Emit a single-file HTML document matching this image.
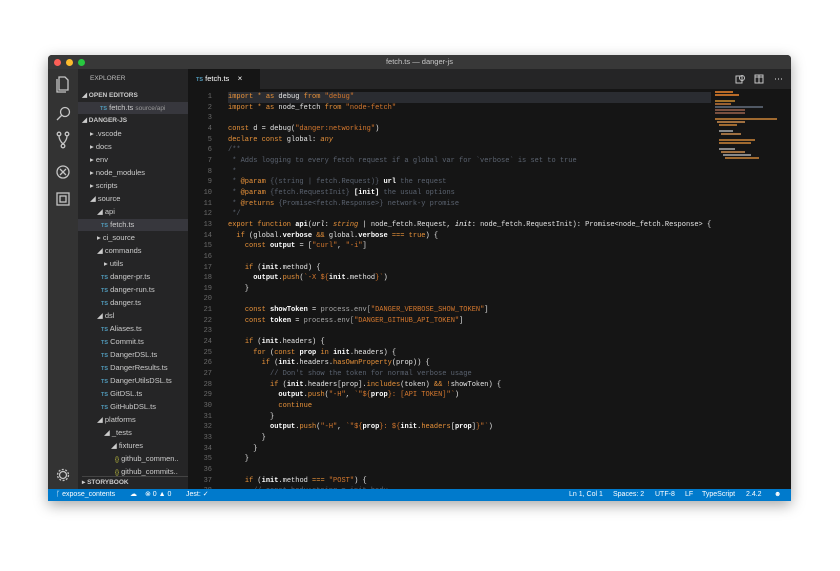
<!DOCTYPE html>
<html><head><meta charset="utf-8"><style>
*{margin:0;padding:0;box-sizing:border-box}
body{width:840px;height:571px;background:#fff;position:relative;overflow:hidden;font-family:"Liberation Sans",sans-serif}
.win{position:absolute;left:48px;top:55px;width:743px;height:446px;background:#151515;box-shadow:0 4px 14px rgba(0,0,0,.35);overflow:hidden;border-radius:4px 4px 0 0}
.title{position:absolute;left:0;top:0;width:100%;height:14px;background:#383838;color:#c8c8c8;font-size:7.5px;text-align:center;line-height:14px}
.dot{position:absolute;top:4px;width:7px;height:7px;border-radius:50%}
.act{position:absolute;left:0;top:14px;width:30px;height:420px;background:#333}
.side{position:absolute;left:30px;top:14px;width:110px;height:420px;background:#252526;color:#ccc;font-size:7.5px}
.side div{position:absolute;white-space:nowrap;height:12px;line-height:12px}
.hdr{font-weight:bold;font-size:6.5px;color:#ccc}
.ts{color:#519aba;font-size:5.5px;font-weight:bold}
.tabs{position:absolute;left:140px;top:14px;right:0;height:20px;background:#252526}
.tab{position:absolute;left:0;top:0;width:72px;height:20px;background:#151515;color:#fff;font-size:7.5px;line-height:20px;padding-left:8px}
.code{position:absolute;left:140px;top:34px;right:0;height:400px;font-family:"Liberation Mono",monospace;font-size:7px}
.ln{position:absolute;left:0;width:24px;text-align:right;color:#6a6a6a;line-height:10.65px;top:0}
.src{position:absolute;left:40px;top:0;color:#e6e6e6;white-space:pre;line-height:10.65px}
.k{color:#e8923a}.s{color:#d5782e}.c{color:#5b6370}.g{color:#aaa}.i{color:#e8923a;font-style:italic}.w{color:#fff;font-weight:bold}
.status{position:absolute;left:0;top:434px;width:100%;height:12px;background:#007acc;color:#fff;font-size:7px;line-height:12px}
.status span{position:absolute}
.mm{position:absolute;height:1.5px}
</style></head><body>
<div class="win">
<div class="title">fetch.ts — danger-js
<span class="dot" style="left:6px;background:#fc5f57"></span><span class="dot" style="left:18px;background:#fdbc2e"></span><span class="dot" style="left:30px;background:#28c840"></span></div>
<div class="act">
<svg width="30" height="420" fill="none" stroke="#c5c5c5" stroke-width="1.3">
<path d="M11 8h6l3 3v10h-9z M9 10v13h9"/>
<circle cx="17" cy="43" r="4.5"/><path d="M14 46l-5 5"/>
<circle cx="11" cy="65" r="1.8"/><circle cx="19" cy="65" r="1.8"/><circle cx="15" cy="77" r="1.8"/><path d="M11 67q0 4 4 8M19 67q0 4-4 8"/>
<circle cx="15" cy="103" r="6"/><path d="M12 100l6 6M18 100l-6 6"/>
<rect x="9" y="124" width="12" height="12"/><rect x="12" y="127" width="6" height="6"/>
<circle cx="15" cy="406" r="3.5"/><circle cx="15" cy="406" r="5.5" stroke-dasharray="2 1.5"/>
</svg></div>
<div class="side">
<div style="left:12px;top:4px;font-size:6.5px;color:#bbb">EXPLORER</div>
<div class="hdr" style="left:4px;top:21px">◢ OPEN EDITORS</div>
<div style="left:0;top:33px;width:110px;background:#37373d;padding-left:22px"><span class="ts">TS</span> fetch.ts <span style="color:#999;font-size:6.5px">source/api</span></div>
<div class="hdr" style="left:4px;top:46px">◢ DANGER-JS</div>
<div style="left:12px;top:59px">▸ .vscode</div>
<div style="left:12px;top:72px">▸ docs</div>
<div style="left:12px;top:85px">▸ env</div>
<div style="left:12px;top:98px">▸ node_modules</div>
<div style="left:12px;top:111px">▸ scripts</div>
<div style="left:12px;top:124px">◢ source</div>
<div style="left:19px;top:137px">◢ api</div>
<div style="left:0;top:150px;width:110px;background:#37373d;padding-left:23px"><span class="ts">TS</span> fetch.ts</div>
<div style="left:19px;top:163px">▸ ci_source</div>
<div style="left:19px;top:176px">◢ commands</div>
<div style="left:26px;top:189px">▸ utils</div>
<div style="left:23px;top:202px"><span class="ts">TS</span> danger-pr.ts</div>
<div style="left:23px;top:215px"><span class="ts">TS</span> danger-run.ts</div>
<div style="left:23px;top:228px"><span class="ts">TS</span> danger.ts</div>
<div style="left:19px;top:241px">◢ dsl</div>
<div style="left:23px;top:254px"><span class="ts">TS</span> Aliases.ts</div>
<div style="left:23px;top:267px"><span class="ts">TS</span> Commit.ts</div>
<div style="left:23px;top:280px"><span class="ts">TS</span> DangerDSL.ts</div>
<div style="left:23px;top:293px"><span class="ts">TS</span> DangerResults.ts</div>
<div style="left:23px;top:306px"><span class="ts">TS</span> DangerUtilsDSL.ts</div>
<div style="left:23px;top:319px"><span class="ts">TS</span> GitDSL.ts</div>
<div style="left:23px;top:332px"><span class="ts">TS</span> GitHubDSL.ts</div>
<div style="left:19px;top:345px">◢ platforms</div>
<div style="left:26px;top:358px">◢ _tests</div>
<div style="left:33px;top:371px">◢ fixtures</div>
<div style="left:37px;top:384px"><span style="color:#cbcb41;font-size:6px">{}</span> github_commen..</div>
<div style="left:37px;top:397px"><span style="color:#cbcb41;font-size:6px">{}</span> github_commits..</div>
<div class="hdr" style="left:4px;top:407px;width:106px;border-top:1px solid #444">▸ STORYBOOK</div>
</div>
<div class="tabs"><div class="tab"><span class="ts">TS</span> fetch.ts &nbsp;&nbsp; <span style="font-size:8px">×</span></div>
<svg style="position:absolute;right:6px;top:5px" width="50" height="10" fill="none" stroke="#c5c5c5" stroke-width="1"><rect x="1" y="2" width="6" height="7"/><circle cx="7" cy="4" r="2.5"/><rect x="20" y="1" width="8" height="8"/><path d="M24 1v8M20 3h8"/><path d="M40 5h1M43 5h1M46 5h1" stroke-width="1.3"/></svg></div>
<div class="code">
<div style="position:absolute;left:40px;top:3px;right:80px;height:10.65px;background:#2a2c31"></div>
<div class="ln" style="top:3px">1<br>2<br>3<br>4<br>5<br>6<br>7<br>8<br>9<br>10<br>11<br>12<br>13<br>14<br>15<br>16<br>17<br>18<br>19<br>20<br>21<br>22<br>23<br>24<br>25<br>26<br>27<br>28<br>29<br>30<br>31<br>32<br>33<br>34<br>35<br>36<br>37<br>38</div>
<div class="src" style="top:3px"><span class="k">import</span> <span class="k">*</span> <span class="k">as</span> debug <span class="k">from</span> <span class="s">"debug"</span>
<span class="k">import</span> <span class="k">*</span> <span class="k">as</span> node_fetch <span class="k">from</span> <span class="s">"node-fetch"</span>

<span class="k">const</span> d = debug(<span class="s">"danger:networking"</span>)
<span class="k">declare const</span> global: <span class="i">any</span>
<span class="c">/**</span>
<span class="c"> * Adds logging to every fetch request if a global var for `verbose` is set to true</span>
<span class="c"> *</span>
<span class="c"> * <span class="k">@param</span> {(string | fetch.Request)} <span class="w">url</span> the request</span>
<span class="c"> * <span class="k">@param</span> {fetch.RequestInit} <span class="w">[init]</span> the usual options</span>
<span class="c"> * <span class="k">@returns</span> {Promise&lt;fetch.Response&gt;} network-y promise</span>
<span class="c"> */</span>
<span class="k">export function</span> <span class="w">api</span>(<span class="i" style="color:#fff">url</span>: <span class="i">string</span> | node_fetch.Request, <span class="i" style="color:#fff">init</span>: node_fetch.RequestInit): Promise&lt;node_fetch.Response&gt; {
  <span class="k">if</span> (global.<span class="w">verbose</span> <span class="k">&amp;&amp;</span> global.<span class="w">verbose</span> <span class="k">===</span> <span class="k">true</span>) {
    <span class="k">const</span> <span class="w">output</span> = [<span class="s">"curl"</span>, <span class="s">"-i"</span>]

    <span class="k">if</span> (<span class="w">init</span>.method) {
      <span class="w">output</span>.<span class="k">push</span>(<span class="s">`-X ${</span><span class="w">init</span>.method<span class="s">}`</span>)
    }

    <span class="k">const</span> <span class="w">showToken</span> = <span class="g">process.env[</span><span class="s">"DANGER_VERBOSE_SHOW_TOKEN"</span>]
    <span class="k">const</span> <span class="w">token</span> = <span class="g">process.env[</span><span class="s">"DANGER_GITHUB_API_TOKEN"</span>]

    <span class="k">if</span> (<span class="w">init</span>.headers) {
      <span class="k">for</span> (<span class="k">const</span> <span class="w">prop</span> <span class="k">in</span> <span class="w">init</span>.headers) {
        <span class="k">if</span> (<span class="w">init</span>.headers.<span class="k">hasOwnProperty</span>(prop)) {
          <span class="c">// Don't show the token for normal verbose usage</span>
          <span class="k">if</span> (<span class="w">init</span>.headers[prop].<span class="k">includes</span>(token) <span class="k">&amp;&amp;</span> <span class="k">!</span>showToken) {
            <span class="w">output</span>.<span class="k">push</span>(<span class="s">"-H"</span>, <span class="s">`"${</span><span class="w">prop</span><span class="s">}: [API TOKEN]"`</span>)
            <span class="k">continue</span>
          }
          <span class="w">output</span>.<span class="k">push</span>(<span class="s">"-H"</span>, <span class="s">`"${</span><span class="w">prop</span><span class="s">}: ${</span><span class="w">init</span>.<span class="k">headers</span>[<span class="w">prop</span>]<span class="s">}"`</span>)
        }
      }
    }

    <span class="k">if</span> (<span class="w">init</span>.method <span class="k">===</span> <span class="s">"POST"</span>) {
      <span class="c">// const body:string = init.body</span></div>
<div style="position:absolute;left:527px;top:2px;width:70px;height:70px">
<div class="mm" style="left:0;top:0;width:18px;background:#b86a28"></div>
<div class="mm" style="left:0;top:3px;width:24px;background:#b86a28"></div>
<div class="mm" style="left:0;top:9px;width:20px;background:#a0702a"></div>
<div class="mm" style="left:0;top:12px;width:16px;background:#9a6030"></div>
<div class="mm" style="left:0;top:15px;width:48px;background:#505864"></div>
<div class="mm" style="left:0;top:18px;width:30px;background:#7a5040"></div>
<div class="mm" style="left:0;top:21px;width:30px;background:#7a5040"></div>
<div class="mm" style="left:0;top:27px;width:62px;background:#a06a30"></div>
<div class="mm" style="left:2px;top:30px;width:28px;background:#a07040"></div>
<div class="mm" style="left:4px;top:33px;width:18px;background:#a06a30"></div>
<div class="mm" style="left:4px;top:39px;width:14px;background:#888"></div>
<div class="mm" style="left:6px;top:42px;width:20px;background:#a07040"></div>
<div class="mm" style="left:4px;top:48px;width:36px;background:#a06a30"></div>
<div class="mm" style="left:4px;top:51px;width:32px;background:#a06a30"></div>
<div class="mm" style="left:4px;top:57px;width:16px;background:#888"></div>
<div class="mm" style="left:6px;top:60px;width:24px;background:#a07040"></div>
<div class="mm" style="left:8px;top:63px;width:28px;background:#888"></div>
<div class="mm" style="left:10px;top:66px;width:34px;background:#a06a30"></div>
</div>
</div>
<div class="status">
<span style="left:8px">ᚴ expose_contents</span>
<span style="left:82px">☁</span>
<span style="left:97px">⊗ 0 ▲ 0</span>
<span style="left:138px">Jest: ✓</span>
<span style="left:521px">Ln 1, Col 1</span>
<span style="left:565px">Spaces: 2</span>
<span style="left:607px">UTF-8</span>
<span style="left:637px">LF</span>
<span style="left:654px">TypeScript</span>
<span style="left:698px">2.4.2</span>
<span style="left:726px">☻</span>
</div>
</div>
</body></html>
